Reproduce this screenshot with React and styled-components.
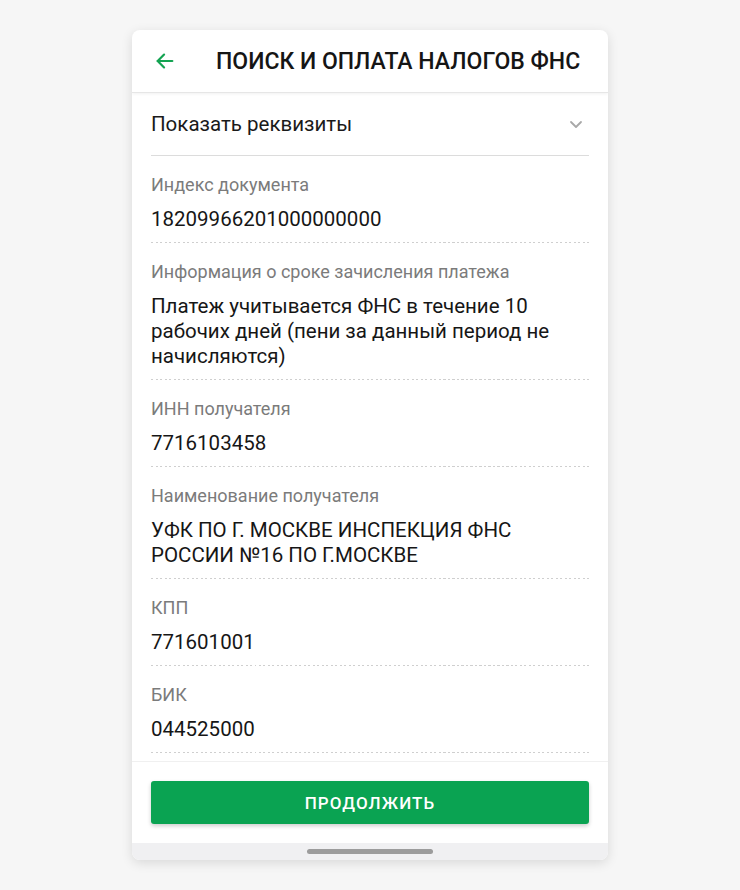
import React from 'react';
import styled, { createGlobalStyle } from 'styled-components';

const GlobalStyle = createGlobalStyle`
  html, body {
    margin: 0;
    padding: 0;
    background: #f6f6f6;
    font-family: Roboto, 'Noto Sans', 'Liberation Sans', sans-serif;
  }
`;

const fields = [
  { label: 'Индекс документа', value: '18209966201000000000' },
  {
    label: 'Информация о сроке зачисления платежа',
    value: 'Платеж учитывается ФНС в течение 10 рабочих дней (пени за данный период не начисляются)',
  },
  { label: 'ИНН получателя', value: '7716103458' },
  { label: 'Наименование получателя', value: 'УФК ПО Г. МОСКВЕ ИНСПЕКЦИЯ ФНС РОССИИ №16 ПО Г.МОСКВЕ' },
  { label: 'КПП', value: '771601001' },
  { label: 'БИК', value: '044525000' },
];

const App = () => {
  return (
    <>
      <GlobalStyle />
      <Page>
        <Card>
          <Header>
            <BackButton aria-label='Назад'>
              <svg width='22' height='22' viewBox='0 0 24 24' fill='none' stroke='#14a352' strokeWidth='2.4' strokeLinecap='round' strokeLinejoin='round'>
                <path d='M20 12H4' />
                <path d='M11 5l-7 7 7 7' />
              </svg>
            </BackButton>
            <Title>ПОИСК И ОПЛАТА НАЛОГОВ ФНС</Title>
          </Header>
          <Content>
            <Toggle>
              <span>Показать реквизиты</span>
              <svg width='14' height='9' viewBox='0 0 14 9' fill='none' stroke='#a8a8a8' strokeWidth='1.8' strokeLinecap='round' strokeLinejoin='round'>
                <path d='M2 2l5 5 5-5' />
              </svg>
            </Toggle>
            {fields.map((f) => (
              <Field key={f.label}>
                <Label>{f.label}</Label>
                <Value>{f.value}</Value>
              </Field>
            ))}
          </Content>
          <Footer>
            <Button>ПРОДОЛЖИТЬ</Button>
          </Footer>
          <NavBar>
            <Handle />
          </NavBar>
        </Card>
      </Page>
    </>
  );
};

const Page = styled.div`
  display: flex;
  justify-content: center;
  padding-top: 30px;
  min-height: 890px;
  box-sizing: border-box;
`;

const Card = styled.div`
  width: 476px;
  height: 830px;
  background: #fff;
  border-radius: 8px;
  overflow: hidden;
  box-shadow: 0 3px 12px rgba(0, 0, 0, 0.12);
  display: flex;
  flex-direction: column;
`;

const Header = styled.div`
  height: 62px;
  display: flex;
  align-items: center;
  gap: 40px;
  padding-left: 22px;
  border-bottom: 1px solid #e6e6e6;
  box-shadow: 0 1px 3px rgba(0, 0, 0, 0.06);
  position: relative;
  z-index: 1;
  flex-shrink: 0;
`;

const BackButton = styled.button`
  border: none;
  background: none;
  padding: 0;
  display: flex;
  align-items: center;
  cursor: pointer;
`;

const Title = styled.h1`
  margin: 0;
  font-size: 23px;
  font-weight: 500;
  color: #151515;
`;

const Content = styled.div`
  flex: 1;
  overflow: hidden;
  padding: 0 19px;
`;

const Toggle = styled.div`
  height: 62px;
  display: flex;
  align-items: center;
  justify-content: space-between;
  padding-right: 6px;
  border-bottom: 1px solid #dcdcdc;
  font-size: 20.5px;
  color: #1a1a1a;
`;

const Field = styled.div`
  position: relative;
  padding: 18px 0 11px;

  &::after {
    content: '';
    position: absolute;
    left: 0;
    right: 0;
    bottom: 0;
    height: 1px;
    background-image: repeating-linear-gradient(to right, #cfcfcf 0 2px, transparent 2px 4.5px);
  }
`;

const Label = styled.div`
  font-size: 18px;
  line-height: 22px;
  color: #7b7b7b;
  margin-bottom: 11px;
`;

const Value = styled.div`
  font-size: 20.5px;
  line-height: 25px;
  color: #161616;
`;

const Footer = styled.div`
  flex-shrink: 0;
  padding: 19px;
  border-top: 1px solid #f0f0f0;
`;

const Button = styled.button`
  width: 100%;
  height: 43px;
  border: none;
  border-radius: 3px;
  background: #0aa352;
  color: #fff;
  font-family: inherit;
  font-size: 17px;
  font-weight: 500;
  letter-spacing: 1.1px;
  box-shadow: 0 2px 4px rgba(0, 0, 0, 0.2);
  cursor: pointer;
`;

const NavBar = styled.div`
  height: 17px;
  background: #f0f0f2;
  display: flex;
  justify-content: center;
  align-items: center;
  flex-shrink: 0;
`;

const Handle = styled.div`
  width: 126px;
  height: 5px;
  border-radius: 3px;
  background: #9c9c9c;
`;

export default App;
